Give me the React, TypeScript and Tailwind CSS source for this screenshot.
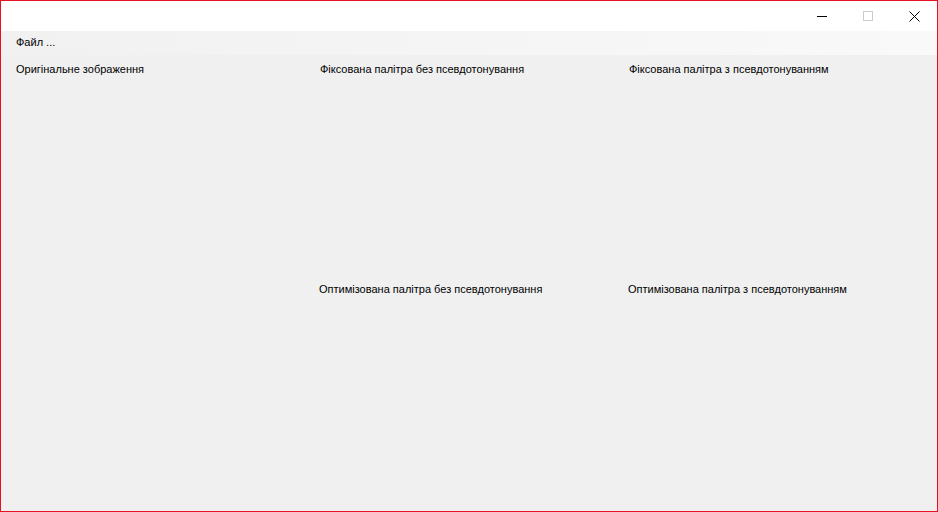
import React from "react";

export default function App() {
  const font = { fontFamily: '"Liberation Sans", "Noto Sans", sans-serif' };
  return (
    <div
      className="w-[938px] h-[512px] border border-[#e81123] bg-[#f0f0f0] flex flex-col overflow-hidden text-[11px] text-black"
      style={font}
    >
      {/* title bar */}
      <div className="h-[30px] bg-white flex justify-end items-stretch shrink-0">
        <div className="w-[46px] flex items-center justify-center">
          <div className="w-[10px] h-px bg-black" />
        </div>
        <div className="w-[46px] flex items-center justify-center">
          <div className="w-[10px] h-[10px] border border-[#cccccc]" />
        </div>
        <div className="w-[46px] flex items-center justify-center">
          <svg width="11" height="11" viewBox="0 0 11 11">
            <path d="M0.5 0.5 L10.5 10.5 M10.5 0.5 L0.5 10.5" stroke="#000" strokeWidth="1" />
          </svg>
        </div>
      </div>
      {/* menu bar */}
      <div className="h-[24px] shrink-0 bg-gradient-to-r from-[#f1f1f1] to-[#f9f9f9] flex items-center pl-[15px] pb-px">
        <span className="leading-none">Файл ...</span>
      </div>
      {/* content */}
      <div className="flex-1 grid grid-cols-[303px_309px_1fr] grid-rows-[220px_1fr] pl-[15px] pt-[7px] leading-[14px]">
        <div className="row-span-2">Оригінальне зображення</div>
        <div className="pl-px">Фіксована палітра без псевдотонування</div>
        <div className="pl-px">Фіксована палітра з псевдотонуванням</div>
        <div>Оптимізована палітра без псевдотонування</div>
        <div>Оптимізована палітра з псевдотонуванням</div>
      </div>
    </div>
  );
}
